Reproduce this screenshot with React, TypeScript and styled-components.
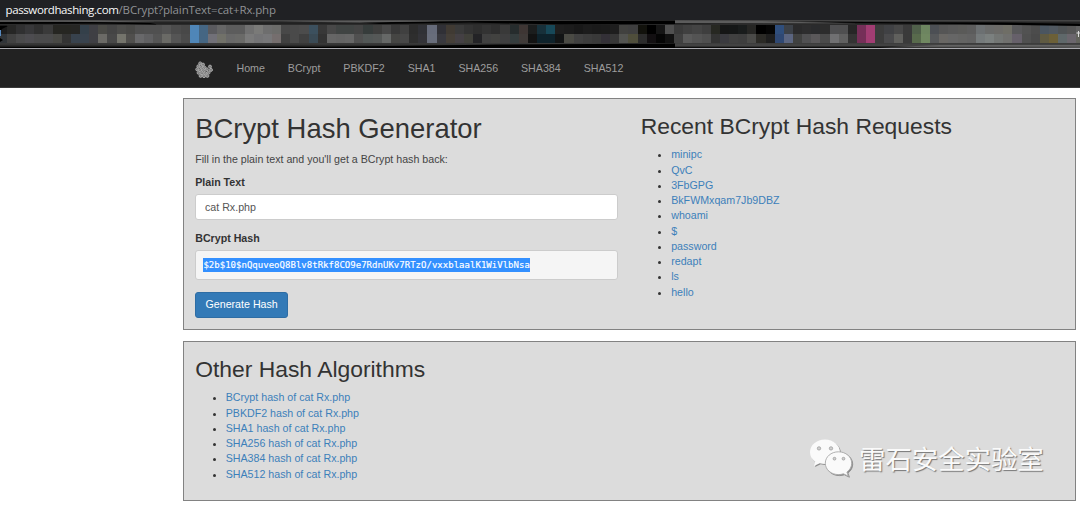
import React from 'react';
import styled, { createGlobalStyle } from 'styled-components';

const Global = createGlobalStyle`
  * { box-sizing: border-box; }
  html, body { margin: 0; padding: 0; }
  body {
    width: 1080px; height: 508px; overflow: hidden; background: #fff; color: #333;
    font-family: 'Liberation Sans', Arial, sans-serif; font-size: 10.67px; line-height: 15.24px;
  }
`;

const Page = styled.div`
  position: relative;
  height: 508px;
  overflow: hidden;
`;

const AddressBar = styled.div`
  height: 20px;
  padding-left: 5.5px;
  background: #202124;
  color: #8f9194;
  font: 11.5px/20px 'Open Sans', 'Noto Sans', sans-serif;
  white-space: nowrap;
`;
const Host = styled.span`
  color: #f8f9fa;
  letter-spacing: -0.38px;
`;
const Path = styled.span`
  letter-spacing: -0.13px;
`;

const Bookmarks = styled.div`
  position: relative;
  height: 29px;
  padding: 5px 0;
  border-bottom: 1px solid #a9a9ae;
  background: linear-gradient(#4c4c4c, #1c1c1c 3px, #303030 5px, #303030 22px, #3a3a3a 24px, #252525 26px, #050505 28px);
  overflow: hidden;
`;
const Mosaic = styled.div`
  display: flex;
  height: 18px;
  margin-left: -2.25px;
`;
const Tile = styled.div<{ $top: string; $bottom: string }>`
  flex: 0 0 9.15px;
  background: linear-gradient(#${p => p.$top} 50%, #${p => p.$bottom} 50%);
`;
const Streaks = styled.svg`
  position: absolute;
  left: 0;
  top: 0;
`;

const Navbar = styled.nav`
  display: flex;
  align-items: center;
  height: 39px;
  padding: 1px 0 0 195px;
  background: #222;
  border-bottom: 1px solid #3a3a3a;
`;
const Brand = styled.a`
  display: flex;
  width: 18px;
  margin-right: 12px;
  padding-top: 2px;
`;
const NavLink = styled.a`
  padding: 0 11.46px;
  color: #9d9d9d;
`;

const Main = styled.main`
  display: flex;
  flex-direction: column;
  gap: 11px;
  padding: 10px 4px 0 183px;
`;
const Panel = styled.section<{ $height: number }>`
  display: flex;
  gap: 23px;
  height: ${p => p.$height}px;
  padding: 0 11.2px;
  border: 1px solid #828282;
  background: #dcdcdc;
`;
const Column = styled.div<{ $width: number }>`
  flex: 0 0 ${p => p.$width}px;
`;
const Title = styled.h1`
  margin: 15.2px 0 7.6px;
  font-size: 27.43px;
  font-weight: 400;
  line-height: 30.2px;
`;
const Subtitle = styled.h2`
  margin: 15.2px 0 8.2px;
  font-size: 22.86px;
  font-weight: 400;
  line-height: 25.1px;
`;
const Intro = styled.p`
  margin: 0 0 7.6px;
  color: #444;
`;
const Label = styled.label`
  display: block;
  margin-bottom: 3.8px;
  font-weight: 700;
`;
const Input = styled.input`
  display: block;
  width: 100%;
  height: 26px;
  margin-bottom: 11.6px;
  padding: 0 8.8px;
  border: 1px solid #ccc;
  border-radius: 3px;
  background: #fff;
  color: #555;
  font: inherit;
  outline: 0;
`;
const HashBox = styled.pre`
  height: 30px;
  margin: 0 0 11.2px;
  padding: 7px 7.2px;
  border: 1px solid #ccc;
  border-radius: 3px;
  background: #f5f5f5;
  font: 9px/14px 'DejaVu Sans Mono', monospace;
`;
const Selection = styled.span`
  display: inline-block;
  height: 14px;
  background: #3390ff;
  color: #fff;
  letter-spacing: 0.023px;
  -webkit-text-stroke: 0.15px #fff;
`;
const Button = styled.button`
  height: 26px;
  padding: 0 9.3px;
  border: 1px solid #2e6da4;
  border-radius: 3px;
  background: #337ab7;
  color: #fff;
  font: inherit;
`;
const List = styled.ul`
  margin: 0;
  padding-left: 30.5px;
`;
const Item = styled.li`
  height: 15.24px;
`;
const Link = styled.a`
  color: #3d80ba;
`;

const Watermark = styled.div`
  position: absolute;
  left: 808px;
  top: 438px;
  display: flex;
  align-items: center;
  color: #fafafa;
  font: 26.4px/40px 'Noto Sans CJK SC', sans-serif;
  text-shadow: 1px 1px 1px #777;
  white-space: nowrap;
`;
const WatermarkText = styled.span`
  margin-left: 6px;
`;
const ChatIcon = styled.svg`
  filter: drop-shadow(1px 1px 0.6px #8c8c8c);
`;

const tiles = `262625/414141 303031/4a4a4b 38383a/4d4c50 303030/4a4a4b 3a3a3a/4a4a4b 262622/484844 262622/333333
262624/38424d 34404a/38424d 3f3f44/3f3f44 4a4a46/6b6a66 444444/484848 4c4c4a/74746c 484846/504f4d 4f4f4f/68686a
505050/606062 505050/555555 555555/6a6a66 4c4c4c/555555 484848/4b4b4b 4f86b8/4f86b8 456683/456683 5a5a5e/717078
666666/717169 5c5c5c/686868 5c5c5c/6a6a68 707070/7a7a7a 7a7a78/747476 6e6e6e/777779 6c6c6a/756e6e 484848/404040
4a4a4a/4a4a4a 4c4c4c/404040 3c505e/3a4a55 383838/333333 484848/666666 404443/646464 404443/666666 444444/505050
363c3b/525756 3e3e3d/555857 484848/666867 383838/454543 404040/474747 2c2c2c/2e2e2e 303136/333338 666b7a/686d7b
303036/38383e 403a33/453f38 3a3a3a/444044 333333/40403a 2e2e2e/232326 333333/404040 2e2e2e/424240 393939/3e3e3f
262c2d/343c3d 3e3634/3f3a38 1b1d1d/131313 17303a/0e222b 174858/0e222b 1e1e1e/121415 1c1c1c/4a4a44 181818/404040
1c1c1c/3c3c3c 1a1a1a/393939 1b1b1b/333037 1e1e1e/363636 41413f/525350 3f3f3f/4f4e3b 12120c/2b2b2b 000000/120f11
151515/050505 505050/111111 3a3a3a/404040 404040/5a5a5a 444444/545454 3e3e3e/4f4f4f 272822/333333 151616/3a3a3f
151717/404040 191c1c/3e3e3e 262624/4a4a48 000000/2b2a26 050505/1e1e1e 2f4e7c/2f4873 3c4148/5b6580 2a2a2b/404140
2d2d2e/505052 2a2b2d/5a585a 2c2c2c/4a4a4a 4f4f51/707072 4f4f50/606060 262626/333333 752f58/752f58 a23d73/a23d73
3c3c3c/3c3c3c 404144/4a4a4c 484848/60605d 3a3a3a/3a3a3a 50604a/586a4c 6d8560/708861 4c4f54/56585a 555555/696764
585858/666666 5a5a58/646463 5c5c5c/626262 6c7072/757a7b 6a6b6a/7b807f 6c6b68/737674 6f6e66/70706e 58585a/66606a
525252/505050 4c4c4c/4a4a4a 4a5560/5f5a42 505860/6c6038 4f5355/5f686a 555555/6b666d 606060/62635c 333333/333333`
  .split(/\s+/)
  .map(pair => pair.split('/'));

const navigation = ['Home', 'BCrypt', 'PBKDF2', 'SHA1', 'SHA256', 'SHA384', 'SHA512'];
const recent = ['minipc', 'QvC', '3FbGPG', 'BkFWMxqam7Jb9DBZ', 'whoami', '$', 'password', 'redapt', 'ls', 'hello'];
const algorithms = ['BCrypt', 'PBKDF2', 'SHA1', 'SHA256', 'SHA384', 'SHA512'];

const beads = [
  [5.2, 2.4], [8, 3.6], [3.4, 5.3], [6.4, 6.2], [9.5, 6.6], [15, 5.6],
  [2.2, 8.4], [5.2, 9.2], [8.5, 9.6], [11.9, 8.4], [16, 8.9],
  [3.6, 11.8], [7, 12.4], [10.4, 12.2], [13.6, 11.6], [5.6, 14.9], [9, 15.2], [12.4, 14.9],
];

const Logo = () => (
  <svg width="18" height="17" viewBox="0 0 18 17" fill="#6c6c6c" stroke="#bdbdbd" strokeWidth="0.8">
    {beads.map(([x, y]) => (
      <g key={`${x}-${y}`}>
        <circle cx={x} cy={y} r="1.5" />
        <circle cx={x} cy={y} r="0.4" stroke="none" fill="#ddd" />
      </g>
    ))}
  </svg>
);

const ChatLogo = () => (
  <ChatIcon width="45" height="40" viewBox="0 0 45 40">
    <path fill="#fafafa" d="M17 1.5C8.6 1.5 2 7.2 2 14.2c0 4 2 7.2 5.2 9.5L6 28l5.7-2.7c1.700.5 3.4.8 5.3.8 8.4 0 15-5.3 15-12S25.4 1.5 17 1.5Z" />
    <path fill="#fafafa" stroke="#a8a8a8" strokeWidth=".9" d="M30.5 13.8c-7.4 0-13.2 5-13.2 11.4s5.8 11.4 13.2 11.4c1.800 0 3.4-.3 4.900-.8l5 2.400-1.500-4.200c3-2.100 4.800-5.200 4.800-8.800 0-6.300-5.800-11.400-13.200-11.400Z" />
    <g fill="#d0d0d0" stroke="#8a8a8a" strokeWidth=".6">
      <circle cx="11" cy="10.4" r="1.7" />
      <circle cx="23" cy="10.4" r="1.7" />
      <circle cx="26.5" cy="20.7" r="1.4" />
      <circle cx="35.5" cy="20.7" r="1.4" />
    </g>
  </ChatIcon>
);

export default function App() {
  return (
    <Page>
      <Global />
      <AddressBar>
        <Host>passwordhashing.com</Host>
        <Path>/BCrypt?plainText=cat+Rx.php</Path>
      </AddressBar>
      <Bookmarks>
        <Mosaic>
          <Tile $top="1c1c1c" $bottom="303438" />
          {tiles.map(([top, bottom], i) => <Tile key={i} $top={top} $bottom={bottom} />)}
        </Mosaic>
        <Streaks width="1080" height="28" viewBox="0 0 1080 28">
          <path fill="#000" d="M0 2 60 1.500 150 3 158 4.500 100 3.500 0 4ZM360 2.500 480 1 675 .5V4L560 4.500 470 2.500 380 4ZM800 1.500 900 2.300 1000 2.500 1080 4V6L960 4 860 3Z" />
          <path fill="#5c5c5c" d="M0 .5h100l60 1.500L0 1.800ZM280 1.500 400 .5 440 1.200 360 2.500ZM675 .5 760 1 860 3.500 675 3Z" />
          <path fill="#000" d="M0 27.200 200 26.500 320 27 500 24.500 675 23.500V28H0Z" />
          <path fill="#424242" d="M675 23.500h405V26L675 26.500Z" />
          <path fill="#707070" d="M880 27.500 940 25h140v3Z" opacity=".7" />
          <path fill="#000" d="M0 6h8L2 9 0 12ZM0 18l3 2-3 2Z" />
          <path fill="#5689c0" d="M0 10h1v6H0Z" />
          <path stroke="#ddd" strokeWidth="1" d="M1076.500 13h3.500M1078.500 11v6" />
        </Streaks>
      </Bookmarks>
      <Navbar>
        <Brand><Logo /></Brand>
        {navigation.map(name => <NavLink key={name}>{name}</NavLink>)}
      </Navbar>
      <Main>
        <Panel $height={232}>
          <Column $width={422.5}>
            <Title>BCrypt Hash Generator</Title>
            <Intro>Fill in the plain text and you'll get a BCrypt hash back:</Intro>
            <Label>Plain Text</Label>
            <Input readOnly value="cat Rx.php" />
            <Label>BCrypt Hash</Label>
            <HashBox><Selection>$2b$10$nQquveoQ8Blv8tRkf8CO9e7RdnUKv7RTzO/vxxblaalK1WiVlbNsa</Selection></HashBox>
            <Button>Generate Hash</Button>
          </Column>
          <Column $width={420}>
            <Subtitle>Recent BCrypt Hash Requests</Subtitle>
            <List>{recent.map(name => <Item key={name}><Link>{name}</Link></Item>)}</List>
          </Column>
        </Panel>
        <Panel $height={160}>
          <Column $width={430}>
            <Subtitle>Other Hash Algorithms</Subtitle>
            <List>{algorithms.map(name => <Item key={name}><Link>{name} hash of cat Rx.php</Link></Item>)}</List>
          </Column>
        </Panel>
      </Main>
      <Watermark>
        <ChatLogo />
        <WatermarkText>雷石安全实验室</WatermarkText>
      </Watermark>
    </Page>
  );
}
